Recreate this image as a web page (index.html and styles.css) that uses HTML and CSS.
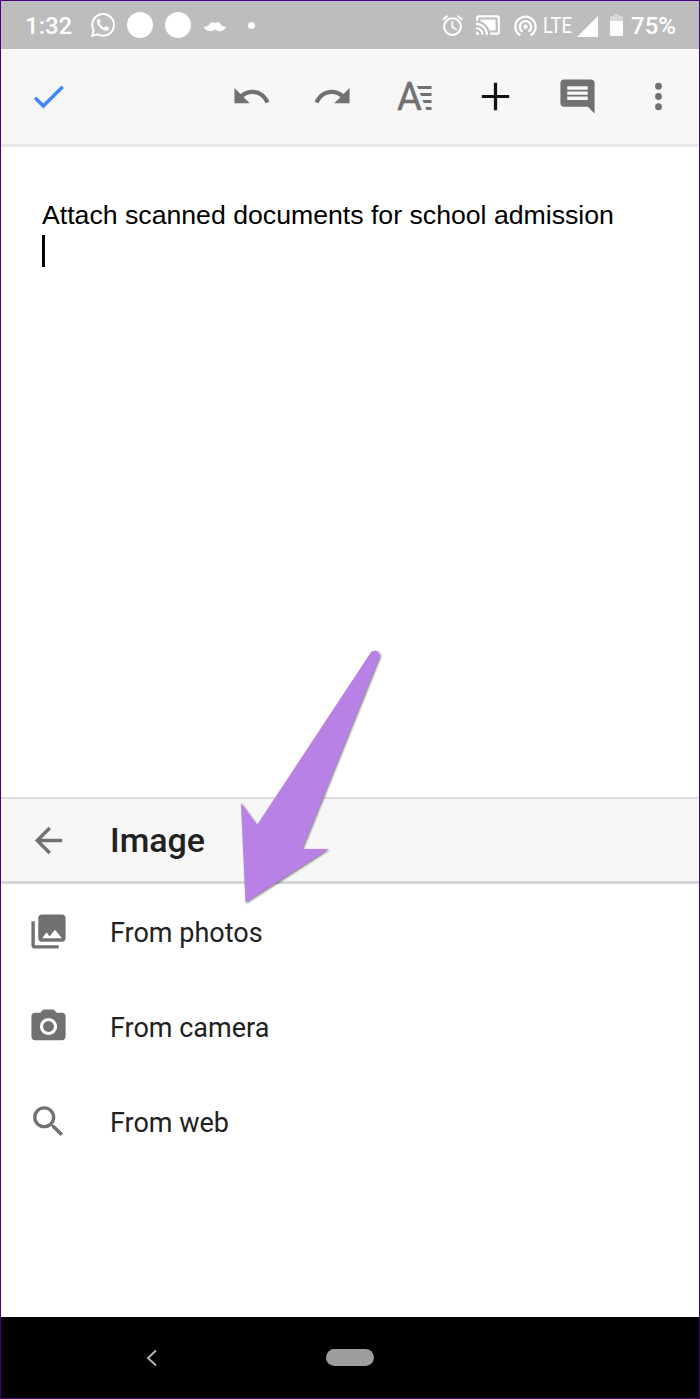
FILE: index.html
```
<!DOCTYPE html>
<html lang="en">
<head>
	<meta charset="utf-8">
	<title>Insert image</title>
	<link rel="stylesheet" href="styles.css">
</head>

<body>
	<div class="phone">
		<div class="status">
			<span class="time">1:32</span>
			<svg class="whatsapp" viewBox="0 0 24 24">
				<path d="M1.2 22.8l1.500-5.600A10.800 10.800 0 1 1 7 21.400z" fill="none" stroke="#fff" stroke-width="2"/>
				<path d="M8.700 6.300c-.3-.6-.6-.6-.9-.6-1 0-2 1-2 2.500 0 3.800 5.500 9.600 9.500 9.600 1.600 0 2.900-1.100 2.900-2.500 0-.5-.1-.7-.5-.9l-2.400-1.200c-.4-.2-.7-.1-.9.2l-1 1.200c-2-.7-3.800-2.300-4.700-4.200l.9-1.200c.2-.3.1-.5 0-.7z"/>
			</svg>
			<span class="disc"></span>
			<span class="disc"></span>
			<svg class="mustache" viewBox="0 0 22 10">
				<path d="M11 1C9-.3 6.600 0 5.300 2.200 4.200 4.200 2.300 5 0 4.500 1 9.500 8 10.500 11 7.300c3 3.200 10 2.200 11-2.800-2.300.5-4.200-.3-5.300-2.300C15.400 0 13-.3 11 1z"/>
			</svg>
			<span class="dot"></span>

			<svg class="alarm" viewBox="0 0 24 24">
				<path d="M22 5.720l-4.600-3.860-1.290 1.530 4.600 3.860L22 5.720zM7.880 3.390L6.600 1.860 2 5.710l1.290 1.530 4.590-3.850zM12.500 8H11v6l4.750 2.850.75-1.230-3.750-2.370V8zM12 4c-4.970 0-9 4.030-9 9s4.020 9 9 9c4.970 0 9-4.030 9-9s-4.030-9-9-9zm0 16c-3.870 0-7-3.130-7-7s3.130-7 7-7 7 3.130 7 7-3.130 7-7 7z"/>
			</svg>
			<svg class="cast" viewBox="0 0 24 24">
				<path d="M1 18v3h3c0-1.660-1.340-3-3-3zm0-4v2c2.760 0 5 2.240 5 5h2c0-3.870-3.130-7-7-7zm18-7H5v1.630c3.960 1.280 7.090 4.410 8.370 8.370H19V7zM1 10v2c4.970 0 9 4.030 9 9h2c0-6.080-4.930-11-11-11zm20-7H3c-1.100 0-2 .9-2 2v3h2V5h18v14h-7v2h7c1.100 0 2-.9 2-2V5c0-1.100-.9-2-2-2z"/>
			</svg>
			<svg class="hotspot" viewBox="0 0 24 24">
				<path d="M12 11c-1.100 0-2 .9-2 2s.9 2 2 2 2-.9 2-2-.9-2-2-2zm6 2c0-3.310-2.690-6-6-6s-6 2.690-6 6c0 2.220 1.210 4.150 3 5.190l1-1.740c-1.190-.7-2-1.970-2-3.450 0-2.210 1.790-4 4-4s4 1.790 4 4c0 1.480-.81 2.750-2 3.450l1 1.740c1.790-1.040 3-2.970 3-5.190zM12 3C6.480 3 2 7.480 2 13c0 3.700 2.010 6.920 4.990 8.650l1-1.730C5.610 18.530 4 15.960 4 13c0-4.420 3.580-8 8-8s8 3.580 8 8c0 2.960-1.610 5.530-4 6.920l1 1.730c2.990-1.730 5-4.950 5-8.650 0-5.520-4.480-10-10-10z"/>
			</svg>
			<svg class="lte" viewBox="0 0 30 32">
				<text x="0" y="23.500" textLength="29" lengthAdjust="spacingAndGlyphs">LTE</text>
			</svg>
			<svg class="signal" viewBox="0 0 21 21"><path d="M21 0v21H0z"/></svg>
			<svg class="battery" viewBox="0 0 13 22">
				<path d="M4 0h5v2h3q1 0 1 1v4H0V3q0-1 1-1h3z" opacity=".4"/>
				<path d="M0 7h13v14q0 1-1 1H1q-1 0-1-1z"/>
			</svg>
			<span class="percent">75%</span>
		</div>

		<div class="toolbar">
			<svg class="icon done" viewBox="0 0 24 24"><path d="M9 16.170L4.830 12l-1.420 1.410L9 19 21 7l-1.410-1.410z"/></svg>
			<svg class="icon" viewBox="0 0 24 24"><path d="M12.500 8c-2.650 0-5.050.99-6.900 2.600L2 7v9h9l-3.620-3.620c1.390-1.160 3.160-1.880 5.120-1.880 3.540 0 6.550 2.310 7.600 5.500l2.370-.78C21.080 11.030 17.150 8 12.500 8z"/></svg>
			<svg class="icon" viewBox="0 0 24 24"><path d="M18.400 10.600C16.550 8.990 14.150 8 11.500 8c-4.650 0-8.580 3.030-9.960 7.220L3.900 16c1.050-3.190 4.050-5.500 7.600-5.500 1.950 0 3.730.72 5.120 1.880L13 16h9V7l-3.600 3.600z"/></svg>
			<svg class="icon format" viewBox="0 0 41 41">
				<text x="3" y="34">A</text>
				<path d="M23 10h14.500v3H24.300zM25.800 17h11.700v3H27zM28.500 24h9v3h-7.800zM31.200 31h6.300v3h-5.100z"/>
			</svg>
			<svg class="icon add" viewBox="0 0 24 24"><path d="M20 12.950h-7.050V20h-1.900v-7.050H4v-1.900h7.050V4h1.900v7.050H20z"/></svg>
			<svg class="icon" viewBox="0 0 24 24"><path d="M21.990 4c0-1.100-.89-2-1.990-2H4c-1.100 0-2 .9-2 2v12c0 1.100.9 2 2 2h14l4 4-.01-18zM18 14H6v-2h12v2zm0-3H6V9h12v2zm0-3H6V6h12v2z"/></svg>
			<svg class="icon" viewBox="0 0 24 24"><circle cx="12" cy="6" r="2"/><circle cx="12" cy="12" r="2"/><circle cx="12" cy="18" r="2"/></svg>
		</div>

		<div class="document">
			<p>Attach scanned documents for school admission</p>
			<div class="cursor"></div>
		</div>

		<div class="panel">
			<div class="panel-title">
				<svg class="icon" viewBox="0 0 24 24"><path d="M20 11H7.830l5.590-5.590L12 4l-8 8 8 8 1.410-1.410L7.830 13H20v-2z"/></svg>
				<h1>Image</h1>
			</div>
			<ul>
				<li>
					<svg class="icon" viewBox="0 0 24 24"><path d="M22 16V4c0-1.100-.9-2-2-2H8c-1.100 0-2 .9-2 2v12c0 1.100.9 2 2 2h12c1.100 0 2-.9 2-2zM8.300 16l2.600-3.500 1.700 2.400 3.200-3.900 4.100 5zM2 6v14c0 1.100.9 2 2 2h14v-2H4V6H2z"/></svg>
					<span>From photos</span>
				</li>
				<li>
					<svg class="icon" viewBox="0 0 24 24"><circle cx="12" cy="12" r="3.200"/><path d="M9 2L7.170 4H4c-1.100 0-2 .9-2 2v12c0 1.100.9 2 2 2h16c1.100 0 2-.9 2-2V6c0-1.100-.9-2-2-2h-3.170L15 2H9zm3 15c-2.760 0-5-2.240-5-5s2.240-5 5-5 5 2.240 5 5-2.240 5-5 5z"/></svg>
					<span>From camera</span>
				</li>
				<li>
					<svg class="icon" viewBox="0 0 24 24"><path d="M15.500 14h-.79l-.28-.27C15.410 12.590 16 11.110 16 9.500 16 5.910 13.090 3 9.500 3S3 5.910 3 9.500 5.910 16 9.500 16c1.610 0 3.090-.59 4.230-1.570l.27.28v.79l5 4.990L20.490 19l-4.990-5zm-6 0C7.010 14 5 11.990 5 9.500S7.010 5 9.500 5 14 7.010 14 9.500 11.990 14 9.500 14z"/></svg>
					<span>From web</span>
				</li>
			</ul>
		</div>

		<div class="navbar">
			<svg class="back" viewBox="0 0 12 18"><path d="M10 1.500L2 9l8 7.500"/></svg>
			<span class="home"></span>
		</div>

		<svg class="pointer" viewBox="0 0 156 270">
			<path d="M7 159L23 181 136.500 9C139 4.500 147 7 145.500 13L68 205h26.500L11.500 258.500z"/>
		</svg>
	</div>
</body>
</html>
```
FILE: styles.css
```
* {
	box-sizing: border-box;
}

body {
	margin: 0;
	font-family: Roboto, sans-serif;
}

svg {
	display: block;
	flex: none;
}

.phone {
	position: relative;
	display: flex;
	flex-direction: column;
	width: 700px;
	height: 1399px;
	border: 1px solid #4b0082;
	background: #fff;
}

/* status bar */
.status {
	display: flex;
	align-items: center;
	height: 48px;
	padding: 0 23px 0 24px;
	background: #bdbdbd;
	color: #fff;
	fill: #fff;
	font-size: 24px;
	font-weight: 500;
}

.time {
	width: 46px;
	margin: 2px 20px 0 0;
}

.whatsapp {
	width: 24px;
	height: 24px;
	margin-right: 12px;
	overflow: visible;
}

.disc {
	width: 26px;
	height: 26px;
	margin-right: 11.5px;
	border-radius: 50%;
	background: #fff;
}

.mustache {
	width: 22px;
	height: 10px;
	margin: 3px 22px 0 2px;
}

.dot {
	width: 7px;
	height: 7px;
	border-radius: 50%;
	background: #fff;
}

.alarm {
	width: 25px;
	height: 25px;
	margin-left: auto;
}

.cast {
	width: 26px;
	height: 26px;
	margin-left: 10px;
}

.hotspot {
	width: 27px;
	height: 27px;
	margin-left: 11px;
}

.lte {
	width: 30px;
	height: 32px;
	margin-left: 4px;
	overflow: visible;
	font-size: 22px;
	font-weight: 400;
}

.signal {
	width: 21px;
	height: 21px;
	margin: 2px 0 0 4px;
}

.battery {
	width: 13px;
	height: 22px;
	margin-left: 12px;
}

.percent {
	width: 45px;
	margin: 2px 0 0 8px;
}

/* editor toolbar */
.toolbar {
	display: flex;
	align-items: center;
	gap: 40.5px;
	height: 98px;
	padding: 0 20px 1px 27px;
	border-bottom: 3px solid #e9e9e9;
	background: #f7f7f7;
}

.icon {
	width: 41px;
	height: 41px;
	fill: #717171;
}

.done {
	margin-right: auto;
	fill: #4285f4;
}

.format {
	overflow: visible;
}

.format text {
	font-size: 38px;
	stroke: #717171;
	stroke-width: .5;
}

.add {
	fill: #111;
}

.document {
	flex: 1;
	padding: 51px 41px;
}

.document p {
	margin: 0;
	color: #000;
	font: 26.67px/34px "Liberation Sans", Arial, sans-serif;
	white-space: nowrap;
}

.cursor {
	width: 3px;
	height: 32px;
	margin-top: 3px;
	background: #000;
}

/* bottom sheet */
.panel {
	height: 520px;
	color: #212121;
}

.panel-title {
	display: flex;
	align-items: center;
	gap: 41px;
	height: 87px;
	padding-left: 27px;
	border-top: 2px solid #dcdcdc;
	border-bottom: 3px solid #d6d6d6;
	background: #f7f7f7;
}

.panel-title h1 {
	margin: 0;
	font-size: 34px;
	font-weight: 500;
}

.panel ul {
	margin: 0;
	padding: 0;
	list-style: none;
}

.panel li {
	display: flex;
	align-items: center;
	gap: 41px;
	height: 95px;
	padding-left: 27px;
	font-size: 27px;
}

.panel li span {
	margin-top: 3px;
}

/* system navigation */
.navbar {
	display: flex;
	align-items: center;
	height: 81px;
	padding-left: 145px;
	background: #000;
}

.back {
	width: 12px;
	height: 18px;
	fill: none;
	stroke: #b5b5b5;
	stroke-width: 2;
}

.home {
	width: 48px;
	height: 17px;
	margin-left: 168px;
	border-radius: 9px;
	background: #9e9e9e;
}

/* arrow lying over the page */
.pointer {
	position: absolute;
	top: 643px;
	left: 233px;
	width: 156px;
	height: 270px;
	fill: #b980e6;
	filter: drop-shadow(1px 1px 1px rgba(0, 0, 0, .5));
}
```
